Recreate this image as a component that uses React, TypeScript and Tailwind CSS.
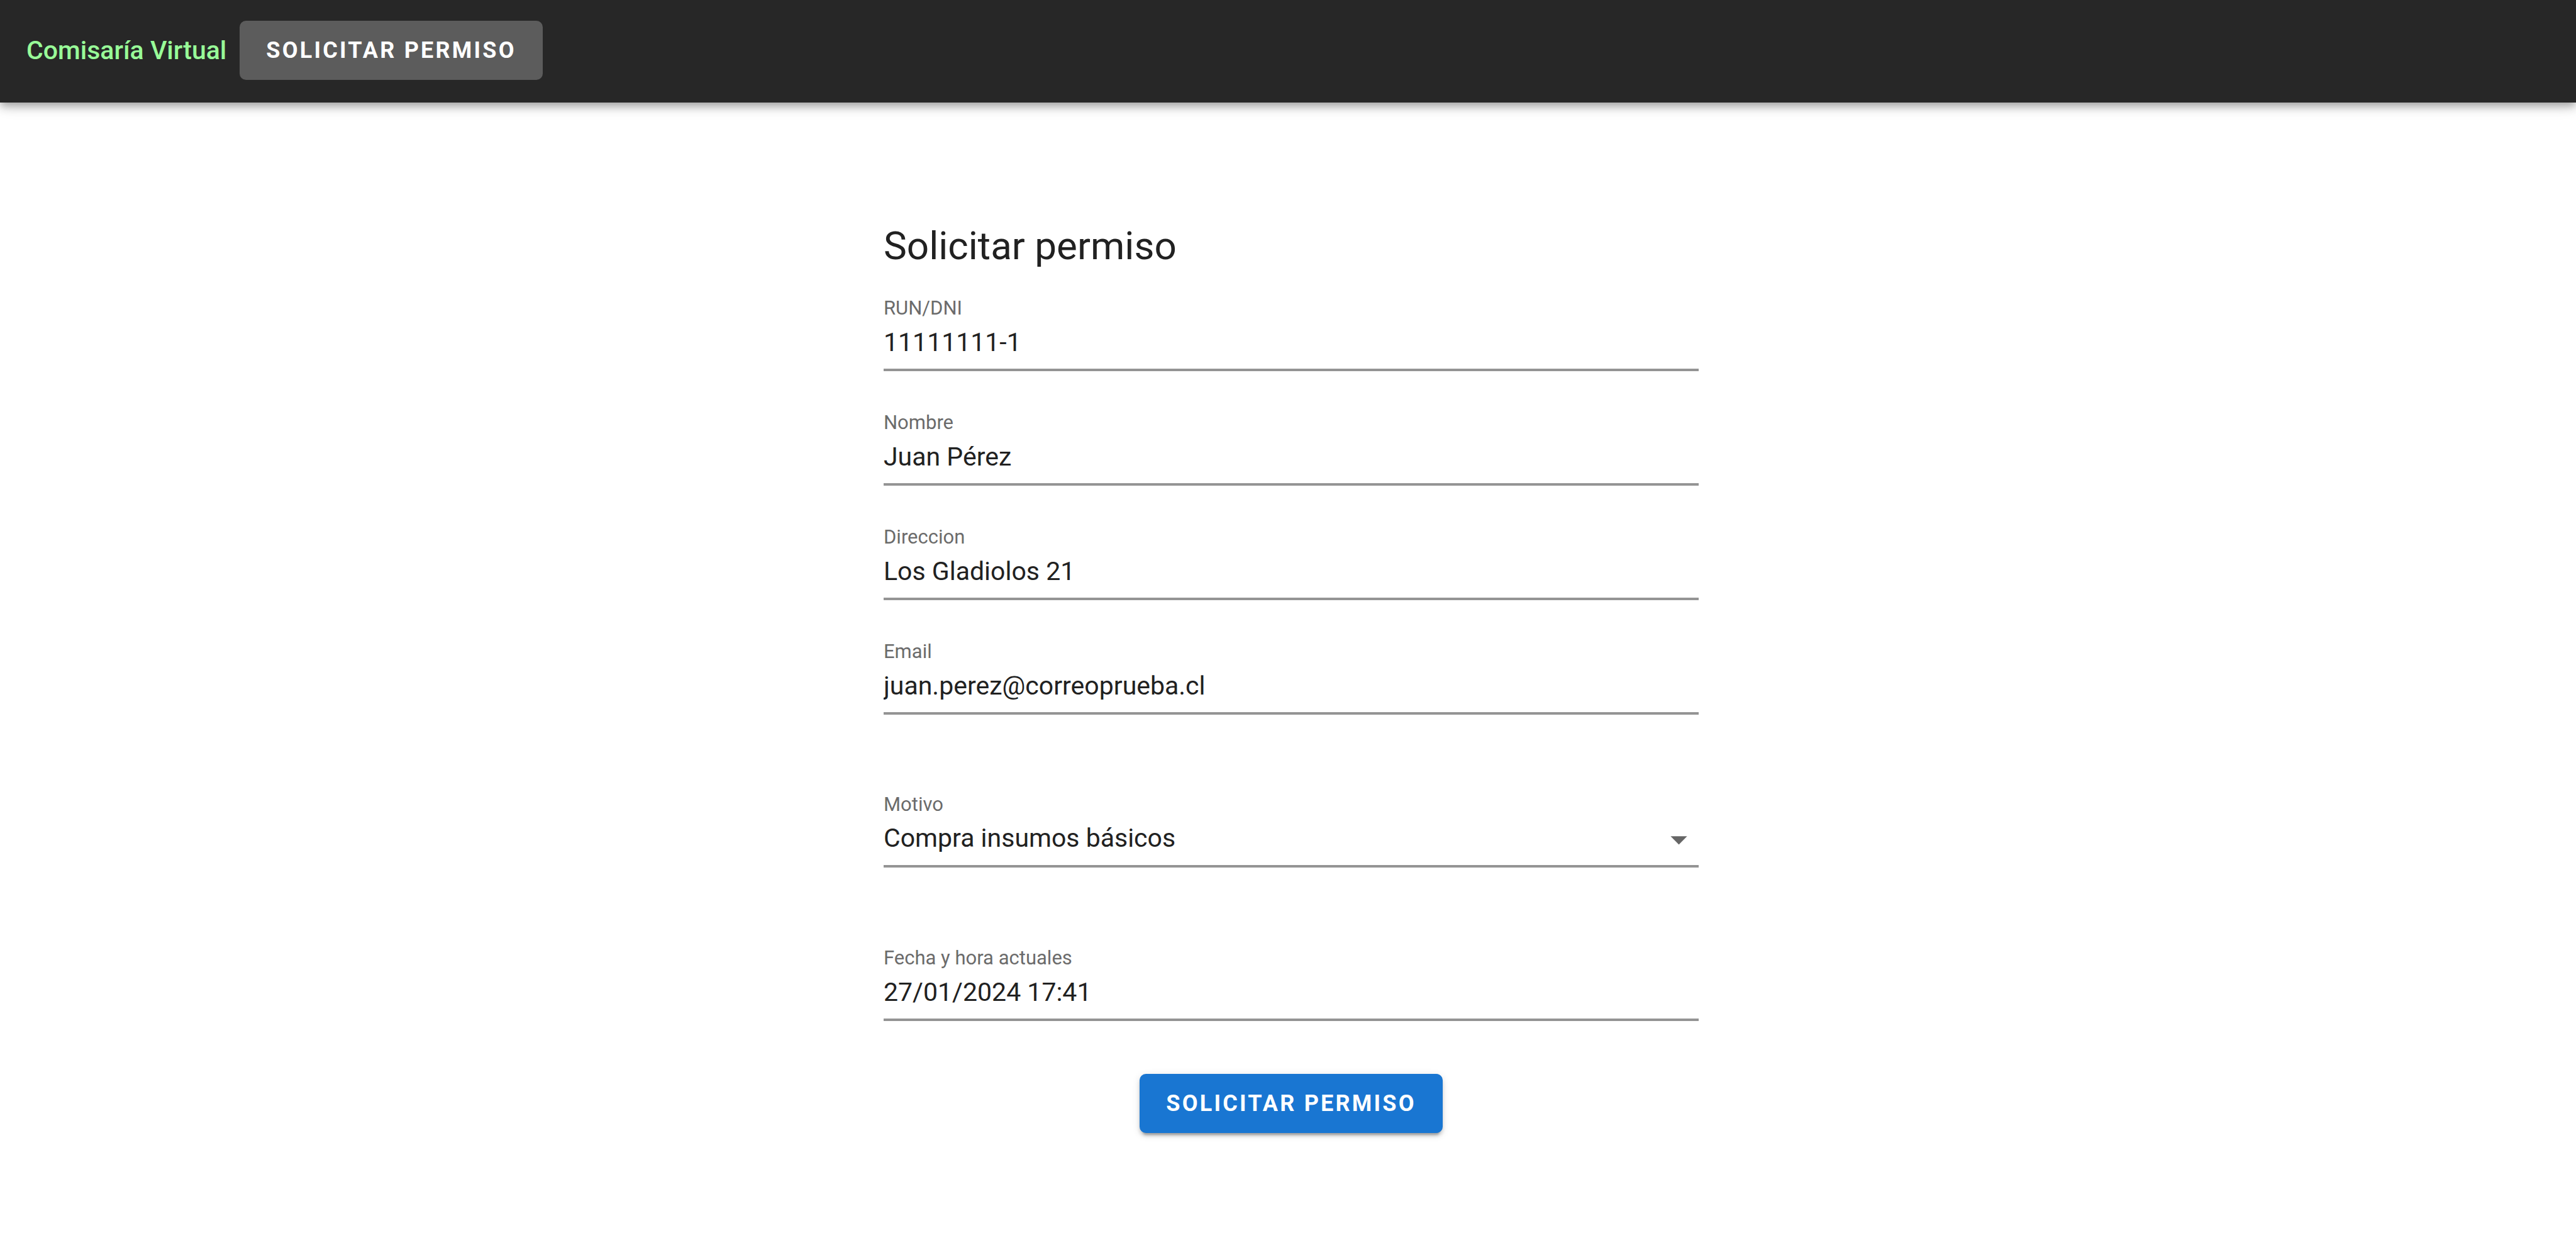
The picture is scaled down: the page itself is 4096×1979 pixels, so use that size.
import { useState } from "react";

const FONT = "font-['Roboto',sans-serif]";

const controlClass =
  "block h-[80px] w-full appearance-none rounded-none border-b-4 border-[#949494] bg-transparent pb-[8px] text-[41px] text-[#212121] outline-none";

function Label({ id, text }: { id: string; text: string }) {
  return (
    <label htmlFor={id} className="block text-[31px] leading-[40px] text-[#6b6b6b]">
      {text}
    </label>
  );
}

function TextField({ id, label, initial, type = "text" }: { id: string; label: string; initial: string; type?: string }) {
  const [value, setValue] = useState(initial);
  return (
    <div>
      <Label id={id} text={label} />
      <input id={id} type={type} value={value} onChange={(e) => setValue(e.target.value)} className={controlClass} />
    </div>
  );
}

function SelectField({ id, label, options }: { id: string; label: string; options: string[] }) {
  return (
    <div>
      <Label id={id} text={label} />
      <div className="relative">
        <select id={id} className={controlClass}>
          {options.map((o) => (
            <option key={o}>{o}</option>
          ))}
        </select>
        <svg viewBox="0 0 24 24" className="pointer-events-none absolute top-[4px] right-0 size-[63px] fill-[#666666]" aria-hidden="true">
          <path d="M7 10l5 5 5-5z" />
        </svg>
      </div>
    </div>
  );
}

const buttonClass =
  "h-[94px] rounded-[10px] px-[42px] text-[36px] font-bold uppercase leading-[42px] tracking-[0.0892857em] text-white";

export default function App() {
  return (
    <div className={`min-h-screen bg-white text-[#212121] ${FONT}`}>
      <header className="flex h-[163px] items-center gap-[21px] bg-[#272727] px-[42px] pb-[3px] shadow-[0_5px_10px_-2px_rgba(0,0,0,0.2),0_10px_13px_0_rgba(0,0,0,0.14),0_2px_26px_0_rgba(0,0,0,0.12)]">
        <a href="#" className="text-[41px] leading-[63px] font-medium text-[#98fb98]">
          Comisaría Virtual
        </a>
        <button type="button" className={`${buttonClass} bg-[#5c5c5c]`}>
          Solicitar permiso
        </button>
      </header>
      <main className="pt-[186px] pl-[10px]">
        <form className="mx-auto flex w-full max-w-[1296px] flex-col" onSubmit={(e) => e.preventDefault()}>
          <h1 className="text-[62px] leading-[84px]">Solicitar permiso</h1>
          <div className="mt-[37px] flex flex-col gap-[62px]">
            <TextField id="run" label="RUN/DNI" initial="11111111-1" />
            <TextField id="nombre" label="Nombre" initial="Juan Pérez" />
            <TextField id="direccion" label="Direccion" initial="Los Gladiolos 21" />
            <TextField id="email" label="Email" initial="juan.perez@correoprueba.cl" type="email" />
          </div>
          <div className="mt-[123px] flex flex-col gap-[124px]">
            <SelectField id="motivo" label="Motivo" options={["Compra insumos básicos"]} />
            <TextField id="fecha" label="Fecha y hora actuales" initial="27/01/2024 17:41" />
          </div>
          <button
            type="submit"
            className={`${buttonClass} mt-[84px] self-center bg-[#1976d2] shadow-[0_8px_3px_-5px_rgba(0,0,0,0.2),0_5px_5px_0_rgba(0,0,0,0.14),0_3px_13px_0_rgba(0,0,0,0.12)]`}
          >
            Solicitar permiso
          </button>
        </form>
      </main>
    </div>
  );
}
